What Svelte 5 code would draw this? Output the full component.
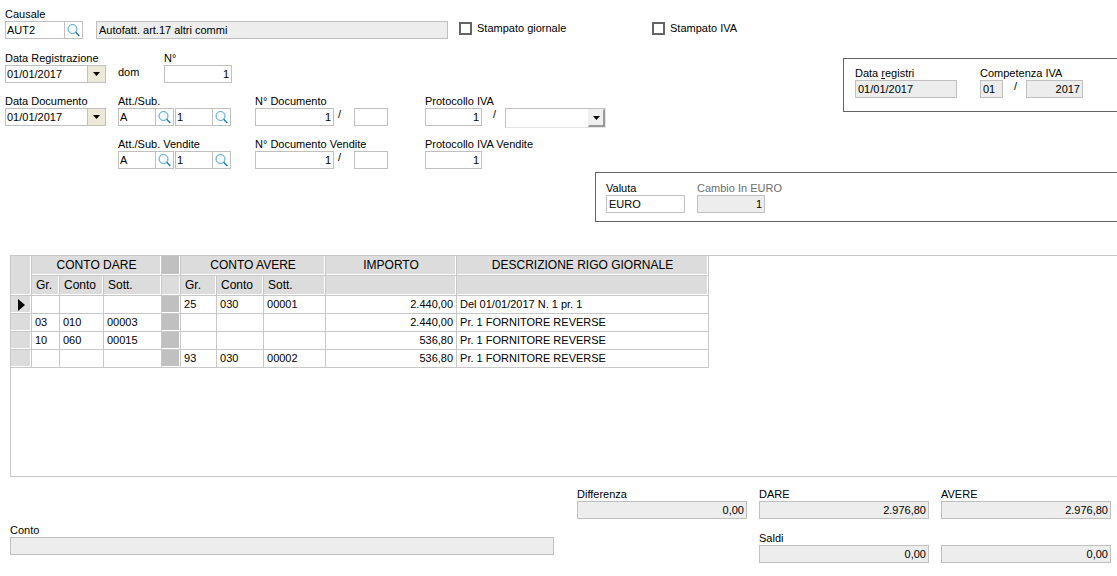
<script lang="ts">
  type Account = { gr: string; conto: string; sott: string };
  type Entry = { dare: Account; avere: Account; importo: string; descrizione: string };

  const none: Account = { gr: "", conto: "", sott: "" };

  let causale = "AUT2";
  let dataRegistrazione = "01/01/2017";
  let dataDocumento = "01/01/2017";
  let selected = 0;

  let entries: Entry[] = [
    { dare: none, avere: { gr: "25", conto: "030", sott: "00001" }, importo: "2.440,00", descrizione: "Del 01/01/2017 N. 1 pr. 1" },
    { dare: { gr: "03", conto: "010", sott: "00003" }, avere: none, importo: "2.440,00", descrizione: "Pr. 1 FORNITORE REVERSE" },
    { dare: { gr: "10", conto: "060", sott: "00015" }, avere: none, importo: "536,80", descrizione: "Pr. 1 FORNITORE REVERSE" },
    { dare: none, avere: { gr: "93", conto: "030", sott: "00002" }, importo: "536,80", descrizione: "Pr. 1 FORNITORE REVERSE" },
  ];
</script>

{#snippet searchIcon()}
  <svg width="13" height="14" viewBox="0 0 13 14" aria-hidden="true">
    <circle cx="5.5" cy="6" r="4.5" fill="#f4fbff" stroke="#4a9fd0" stroke-width="1" />
    <path d="M8.7 9.2 L12.3 13" stroke="#1478c0" stroke-width="1.4" fill="none" />
  </svg>
{/snippet}

{#snippet arrowIcon()}
  <svg width="7" height="4" viewBox="0 0 7 4" aria-hidden="true">
    <path d="M0 0 H7 L3.5 4 Z" fill="#000" />
  </svg>
{/snippet}

<main>
  <section class="top-row">
    <div class="field">
      <label for="causale">Causale</label>
      <div class="lookup causale">
        <input id="causale" bind:value={causale} />
        <button aria-label="Cerca causale">{@render searchIcon()}</button>
      </div>
    </div>
    <input class="box readonly causale-desc" aria-label="Descrizione causale" value="Autofatt. art.17 altri commi" readonly />
    <label class="check giornale"><input type="checkbox" />Stampato giornale</label>
    <label class="check"><input type="checkbox" />Stampato IVA</label>
  </section>

  <section class="middle">
    <div class="document">
      <div class="field">
        <label for="data-reg">Data Registrazione</label>
        <div class="lookup date">
          <input id="data-reg" bind:value={dataRegistrazione} />
          <button aria-label="Apri calendario registrazione">{@render arrowIcon()}</button>
        </div>
      </div>
      <div class="line number">
        <span class="day">dom</span>
        <div class="field">
          <label for="numero">N°</label>
          <input id="numero" class="box w-number right" value="1" />
        </div>
      </div>

      <div class="field">
        <label for="data-doc">Data Documento</label>
        <div class="lookup date">
          <input id="data-doc" bind:value={dataDocumento} />
          <button aria-label="Apri calendario documento">{@render arrowIcon()}</button>
        </div>
      </div>
      <div class="field">
        <label for="att">Att./Sub.</label>
        <div class="pair">
          <div class="lookup att">
            <input id="att" value="A" />
            <button aria-label="Cerca attività">{@render searchIcon()}</button>
          </div>
          <div class="lookup att">
            <input aria-label="Sub." value="1" />
            <button aria-label="Cerca sub.">{@render searchIcon()}</button>
          </div>
        </div>
      </div>
      <div class="field">
        <label for="ndoc">N° Documento</label>
        <div class="line">
          <input id="ndoc" class="box w-doc right" value="1" />
          <span class="slash">/</span>
          <input class="box w-suffix" aria-label="Suffisso documento" />
        </div>
      </div>
      <div class="field">
        <label for="prot">Protocollo IVA</label>
        <div class="line">
          <input id="prot" class="box w-prot right" value="1" />
          <span class="slash wide">/</span>
          <div class="combo">
            <select aria-label="Registro IVA"><option></option></select>
            <span class="combo-arrow">{@render arrowIcon()}</span>
          </div>
        </div>
      </div>

      <div class="field sales">
        <label for="att-v">Att./Sub. Vendite</label>
        <div class="pair">
          <div class="lookup att">
            <input id="att-v" value="A" />
            <button aria-label="Cerca attività vendite">{@render searchIcon()}</button>
          </div>
          <div class="lookup att">
            <input aria-label="Sub. vendite" value="1" />
            <button aria-label="Cerca sub. vendite">{@render searchIcon()}</button>
          </div>
        </div>
      </div>
      <div class="field">
        <label for="ndoc-v">N° Documento Vendite</label>
        <div class="line">
          <input id="ndoc-v" class="box w-doc right" value="1" />
          <span class="slash">/</span>
          <input class="box w-suffix" aria-label="Suffisso documento vendite" />
        </div>
      </div>
      <div class="field">
        <label for="prot-v">Protocollo IVA Vendite</label>
        <input id="prot-v" class="box w-prot right" value="1" />
      </div>
    </div>

    <div class="panel registri">
      <div class="field">
        <label for="data-registri">Data <u>r</u>egistri</label>
        <input id="data-registri" class="box readonly w-registri" value="01/01/2017" readonly />
      </div>
      <div class="field">
        <label for="competenza">Competenza IVA</label>
        <div class="line">
          <input id="competenza" class="box readonly w-month" value="01" readonly />
          <span class="slash wide">/</span>
          <input class="box readonly w-year right" aria-label="Anno competenza" value="2017" readonly />
        </div>
      </div>
    </div>
  </section>

  <section class="panel valuta">
    <div class="field">
      <label for="valuta">Valuta</label>
      <input id="valuta" class="box w-valuta" value="EURO" />
    </div>
    <div class="field">
      <label class="muted" for="cambio">Cambio In EURO</label>
      <input id="cambio" class="box readonly w-number right" value="1" readonly />
    </div>
  </section>

  <section class="grid">
    <table>
      <colgroup>
        <col class="c-mark" /><col class="c-gr" /><col class="c-conto" /><col class="c-sott" />
        <col class="c-gap" /><col class="c-gr2" /><col class="c-conto2" /><col class="c-sott2" />
        <col class="c-importo" /><col class="c-desc" />
      </colgroup>
      <thead>
        <tr>
          <th rowspan="2"></th>
          <th class="group" colspan="3">CONTO DARE</th>
          <th class="dark"></th>
          <th class="group" colspan="3">CONTO AVERE</th>
          <th class="group">IMPORTO</th>
          <th class="group">DESCRIZIONE RIGO GIORNALE</th>
        </tr>
        <tr>
          <th>Gr.</th>
          <th>Conto</th>
          <th>Sott.</th>
          <th></th>
          <th>Gr.</th>
          <th>Conto</th>
          <th>Sott.</th>
          <th></th>
          <th></th>
        </tr>
      </thead>
      <tbody>
        {#each entries as entry, i}
          <tr on:click={() => (selected = i)}>
            <td class="mark">
              {#if i === selected}
                <svg width="7" height="12" viewBox="0 0 7 12" aria-hidden="true"><path d="M0 0 L7 6 L0 12 Z" /></svg>
              {/if}
            </td>
            <td>{entry.dare.gr}</td>
            <td>{entry.dare.conto}</td>
            <td>{entry.dare.sott}</td>
            <td class="dark"></td>
            <td>{entry.avere.gr}</td>
            <td>{entry.avere.conto}</td>
            <td>{entry.avere.sott}</td>
            <td class="right">{entry.importo}</td>
            <td>{entry.descrizione}</td>
          </tr>
        {/each}
      </tbody>
    </table>
  </section>

  <footer>
    <div class="field conto">
      <label for="conto">Conto</label>
      <input id="conto" class="box readonly" readonly />
    </div>
    <div class="totals">
      <div class="field">
        <label for="differenza">Differenza</label>
        <input id="differenza" class="box readonly right" value="0,00" readonly />
      </div>
      <div class="field">
        <label for="dare">DARE</label>
        <input id="dare" class="box readonly right" value="2.976,80" readonly />
      </div>
      <div class="field">
        <label for="avere">AVERE</label>
        <input id="avere" class="box readonly right" value="2.976,80" readonly />
      </div>
      <div class="field saldi">
        <label for="saldo-dare">Saldi</label>
        <input id="saldo-dare" class="box readonly right" value="0,00" readonly />
      </div>
      <input class="box readonly right" aria-label="Saldo avere" value="0,00" readonly />
    </div>
  </footer>
</main>

<style>
  :global(body) {
    background-color: #fff;
  }

  main {
    font-family: "Liberation Sans", Arial, sans-serif;
    font-size: 11px;
    line-height: 13px;
    color: #000;
    padding-top: 8px;
  }

  input, select, button {
    font: inherit;
    color: inherit;
    box-sizing: border-box;
    margin: 0;
    border-radius: 0;
    outline: none;
  }

  label, .day {
    white-space: nowrap;
  }

  .field {
    display: flex;
    flex-direction: column;
    align-items: flex-start;
  }

  .box {
    height: 18px;
    border: 1px solid #c0c0c0;
    background-color: #fff;
    padding: 0 2px;
  }

  .readonly {
    background-color: #ededed;
  }

  .right {
    text-align: right;
  }

  .muted {
    color: #6d6d6d;
  }

  .line, .pair {
    display: flex;
  }

  .pair {
    gap: 1px;
  }

  .w-number { width: 68px; }
  .w-doc { width: 79px; }
  .w-suffix { width: 34px; }
  .w-prot { width: 57px; }
  .w-registri { width: 102px; }
  .w-month { width: 23px; }
  .w-year { width: 57px; }
  .w-valuta { width: 79px; }

  .slash {
    width: 20px;
    padding-left: 4px;
    box-sizing: border-box;
  }

  .slash.wide {
    width: 23px;
    padding-left: 11px;
  }

  /* text box with a button inside the same frame */
  .lookup {
    display: flex;
    box-sizing: border-box;
    height: 18px;
    border: 1px solid #c0c0c0;
    background-color: #fff;
  }

  .lookup input {
    flex: 1;
    min-width: 0;
    border: none;
    background: none;
    padding: 0 1px;
  }

  .lookup button {
    display: flex;
    align-items: center;
    justify-content: center;
    width: 18px;
    padding: 0;
    border: none;
    border-left: 1px solid #c0c0c0;
    background: none;
    cursor: pointer;
  }

  .lookup.causale { width: 78px; }
  .lookup.att { width: 56px; }
  .lookup.date { width: 101px; }

  .lookup.date button {
    background-color: #ece9d8;
  }

  .top-row {
    display: flex;
    align-items: flex-end;
    padding-left: 5px;
  }

  .causale-desc {
    width: 352px;
    margin-left: 13px;
  }

  .check {
    display: flex;
    align-items: center;
    gap: 5px;
    margin-left: 11px;
    margin-bottom: 4px;
  }

  .check.giornale {
    width: 182px;
  }

  .check input {
    appearance: none;
    width: 13px;
    height: 13px;
    border: 2px solid #646464;
  }

  .check input:checked {
    background-color: #646464;
  }

  .middle {
    display: flex;
    align-items: flex-start;
    padding-left: 5px;
    margin-top: 13px;
  }

  .document {
    display: grid;
    grid-template-columns: 113px 137px 170px 418px;
    row-gap: 12px;
  }

  .number {
    grid-column: 2 / -1;
  }

  .sales {
    grid-column: 2;
  }

  .day {
    width: 46px;
    padding-top: 14px;
  }

  .combo {
    display: grid;
    width: 101px;
    height: 20px;
    margin-bottom: -2px;
  }

  .combo select {
    grid-area: 1 / 1;
    appearance: none;
    width: 100%;
    height: 20px;
    padding: 0 20px 0 2px;
    border: 1px solid #c0c0c0;
    border-color: #c0c0c0 #e4e4e4 #e4e4e4 #c0c0c0;
    background-color: #fff;
  }

  .combo-arrow {
    grid-area: 1 / 1;
    justify-self: end;
    display: flex;
    align-items: center;
    justify-content: center;
    box-sizing: border-box;
    width: 17px;
    margin: 1px;
    border: 1px solid #f0f0f0;
    border-right: 2px solid #999;
    border-bottom: 2px solid #999;
    background-color: #f0f0f0;
    pointer-events: none;
  }

  .panel {
    display: flex;
    box-sizing: border-box;
    border: 1px solid #646464;
    border-right: none;
    padding: 9px 11px 8px;
  }

  .registri {
    flex: 1;
    gap: 23px;
    margin-top: 6px;
    padding: 8px 11px 13px;
  }

  .valuta {
    gap: 12px;
    margin-top: 3px;
    margin-left: 595px;
    padding: 9px 10px 8px;
  }

  .grid {
    height: 220px;
    margin-top: 33px;
    margin-left: 10px;
    border: 1px solid #c8c8c8;
    border-right: none;
  }

  table {
    table-layout: fixed;
    width: 698px;
    border-collapse: separate;
    border-spacing: 0;
  }

  .c-mark { width: 21px; }
  .c-gr { width: 28px; }
  .c-conto { width: 44px; }
  .c-sott { width: 58px; }
  .c-gap { width: 19px; }
  .c-gr2 { width: 36px; }
  .c-conto2 { width: 47px; }
  .c-sott2 { width: 62px; }
  .c-importo { width: 131px; }
  .c-desc { width: 252px; }

  th, td {
    box-sizing: border-box;
    height: 18px;
    padding: 0 3px;
    border-right: 1px solid #c8c8c8;
    border-bottom: 1px solid #c8c8c8;
    text-align: left;
    white-space: nowrap;
  }

  th {
    height: 20px;
    padding: 0 4px;
    background-color: #dcdcdc;
    box-shadow: inset -1px -1px 0 #fff;
    font-size: 12px;
    font-weight: normal;
  }

  th.group {
    text-align: center;
  }

  td.right {
    text-align: right;
  }

  td.mark, td.dark {
    background-color: #dcdcdc;
    box-shadow: inset -1px -1px 0 #fff;
  }

  td.dark, th.dark {
    background-color: #c0c0c0;
  }

  td.mark svg {
    display: block;
    margin-left: 4px;
  }

  footer {
    display: flex;
    align-items: flex-end;
    gap: 23px;
    padding: 11px 6px 13px 10px;
  }

  .conto {
    flex: 1;
    padding-bottom: 8px;
  }

  .conto input, .totals input {
    width: 100%;
  }

  .totals {
    display: grid;
    grid-template-columns: repeat(3, 170px);
    gap: 13px 12px;
    align-items: end;
  }

  .saldi {
    grid-column: 2;
  }
</style>
